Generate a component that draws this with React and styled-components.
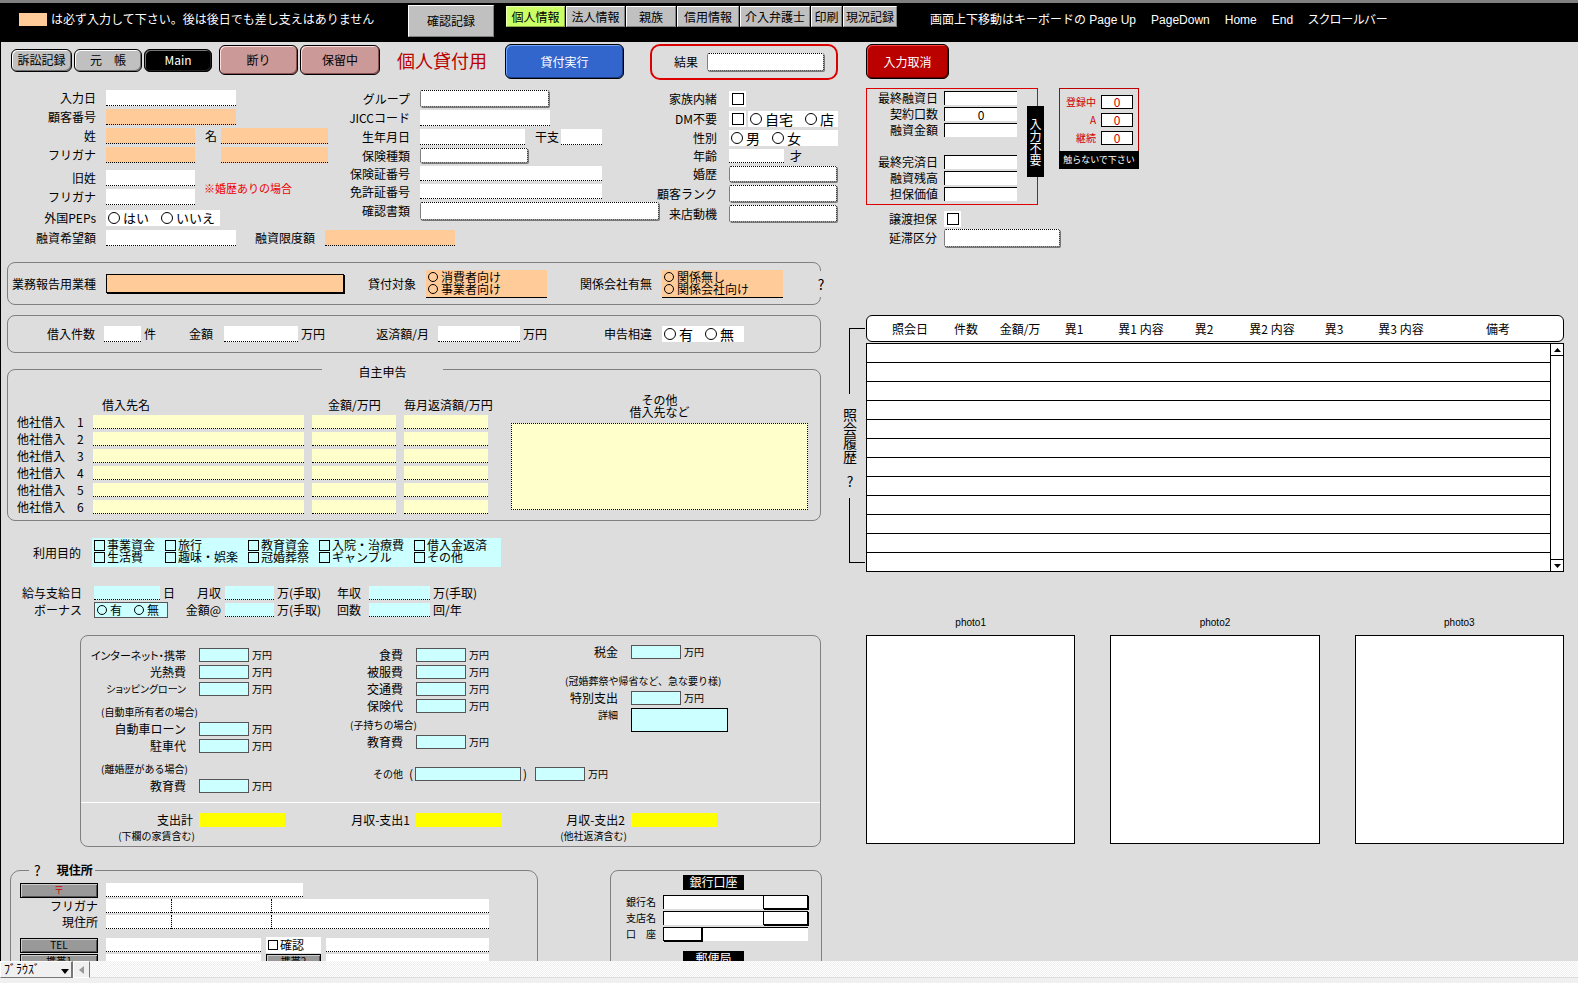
import React, { useId } from "react";
import styled, { createGlobalStyle, css } from "styled-components";

const PEACH = "#ffcc99";
const CYAN = "#ccffff";
const CREAM = "#ffffcc";
const GREY = "#dddddd";

const Global = createGlobalStyle`
  * { box-sizing: border-box; }
  body { margin: 0; background: ${GREY}; }
  body, button, input, select, textarea {
    font-family: "Noto Sans CJK JP", "Liberation Sans", sans-serif;
    font-size: 12px;
    line-height: 14px;
    color: #000;
  }
  input, textarea, button, select, fieldset, legend { margin: 0; padding: 0; border-radius: 0; }
`;

/* ---------- page frame ---------- */

const Page = styled.div`
  height: 100vh;
  display: flex;
  flex-direction: column;
  background: ${GREY};
`;

const TopBar = styled.header`
  flex: none;
  display: flex;
  align-items: flex-start;
  height: 42px;
  padding: 2px 0 0 19px;
  background: #000;
  border-top: 3px solid #808080;
  box-shadow: inset 0 -1px #000;
  color: #fff;
  white-space: nowrap;
`;

const Notice = styled.p`
  display: flex;
  align-items: center;
  gap: 4px;
  width: 389px;
  height: 28px;
  margin: 0;
`;

const Swatch = styled.span`
  width: 28px;
  height: 13px;
  background: ${PEACH};
`;

const FlatButton = styled.button`
  width: ${(p) => p.$w}px;
  height: ${(p) => p.$h}px;
  background: ${(p) => (p.$active ? "#ccff66" : "#c0c0c0")};
  border: 1px solid;
  border-color: ${(p) => (p.$active ? "#eeffbb #88aa44 #88aa44 #eeffbb" : "#fff #808080 #808080 #fff")};
  white-space: nowrap;
`;

const Tabs = styled.nav`
  display: flex;
  gap: 1px;
  padding: 1px 33px 0 12px;
`;

const KeyHints = styled.div`
  display: flex;
  align-items: center;
  gap: 15px;
  height: 30px;
  font-family: "Liberation Sans", "Noto Sans CJK JP", sans-serif;
  span:last-child { font-feature-settings: "palt"; }
`;

const Main = styled.main`
  flex: 1;
  min-height: 0;
  overflow: hidden;
  display: grid;
  grid-template-columns: 839px minmax(0, 1fr);
  align-items: start;
  border-left: 1px solid #000;
`;

const Side = styled.div`
  padding: 2px 14px 0 26px;
`;

/* ---------- fields ---------- */

const tones = { white: "#fff", peach: PEACH, cyan: CYAN, cream: CREAM, yellow: "#ffff00" };

const frames = {
  line: css`
    border: 0;
    border-bottom: 1px dotted #000;
  `,
  popup: css`
    border: 1px dotted #000;
    border-radius: 2px;
    box-shadow: 1px 1px #777;
  `,
  box: css`
    border: 1px solid #555;
  `,
  sunken: css`
    border: 0;
    border-top: 1px solid #000;
    border-left: 1px solid #000;
  `,
  full: css`
    border: 1px solid #000;
  `,
  raised: css`
    border: 1px solid #000;
    box-shadow: 1px 1px #000;
  `,
  none: css`
    border: 0;
  `,
};

const Input = styled.input`
  flex: none;
  display: block;
  width: ${(p) => p.$w}px;
  height: ${(p) => p.$h || 14}px;
  background: ${(p) => tones[p.$tone || "white"]};
  &&& { ${(p) => frames[p.$frame || "line"]} }
  ${(p) => p.$center && "text-align: center;"}
  ${(p) => p.$red && "color: #d00000;"}
`;

const Area = styled.textarea`
  display: block;
  width: ${(p) => p.$w}px;
  height: ${(p) => p.$h}px;
  resize: none;
  background: ${(p) => tones[p.$tone]};
  border: 1px ${(p) => p.$line} #000;
`;

const Label = styled.label`
  flex: none;
  width: ${(p) => (p.$w ? p.$w + "px" : "auto")};
  padding-right: ${(p) => p.$pad || 0}px;
  text-align: right;
  white-space: nowrap;
  color: ${(p) => p.$color || "#000"};
  ${(p) => p.$tight && 'font-size: 11px; font-feature-settings: "palt";'}
  ${(p) => p.$small && "font-size: 10px;"}
`;

const Caption = styled(Label).attrs({ as: "span" })``;

const Unit = styled.span`
  padding-left: 3px;
  white-space: nowrap;
  font-size: ${(p) => (p.$small ? 10 : 12)}px;
`;

const Row = styled.div`
  display: flex;
  align-items: center;
  height: ${(p) => p.$h || 16}px;
  gap: ${(p) => p.$gap || 0}px;
`;

const Stack = styled.div`
  display: flex;
  flex-direction: column;
  gap: ${(p) => p.$gap ?? 3}px;
  padding-top: ${(p) => p.$top || 0}px;
`;

const choice = css`
  appearance: none;
  flex: none;
  margin: 0;
  border: 1px solid #000;
`;

const Radio = styled.input.attrs({ type: "radio" })`
  ${choice}
  width: ${(p) => p.$d}px;
  height: ${(p) => p.$d}px;
  border-radius: 50%;
  &:checked { background: radial-gradient(#000 40%, transparent 45%); }
`;

const Check = styled.input.attrs({ type: "checkbox" })`
  ${choice}
  width: ${(p) => p.$d}px;
  height: ${(p) => p.$d}px;
  &:checked { background: #000; background-clip: content-box; padding: 2px; }
`;

const CheckCell = styled.span`
  display: grid;
  place-items: center;
  width: 17px;
  height: 16px;
  background: #fff;
`;

const Option = styled.label`
  display: flex;
  align-items: center;
  gap: ${(p) => p.$gap || 2}px;
  font-size: ${(p) => p.$size || 12}px;
  line-height: 12px;
  white-space: nowrap;
`;

const Choices = styled.div`
  display: flex;
  align-items: center;
  gap: 12px;
  width: ${(p) => p.$w}px;
  height: 16px;
  padding-left: 2px;
  background: ${(p) => tones[p.$tone || "white"]};
  border: ${(p) => (p.$framed ? "1px solid #555" : "0")};
`;

const ChoiceList = styled.div`
  width: 121px;
  height: 28px;
  padding: 1px 2px;
  background: ${PEACH};
  border-bottom: 1px solid #000;
`;

function Radios({ name, options, w, tone, framed, size = 14 }) {
  return (
    <Choices role="radiogroup" aria-label={name} $w={w} $tone={tone} $framed={framed}>
      {options.map((o) => (
        <Option key={o} $size={size} $gap={3}>
          <Radio name={name} $d={size === 12 ? 10 : 12} />
          {o}
        </Option>
      ))}
    </Choices>
  );
}

function Field({ label, lw, pad, h, w, tone, frame, value, small, tight, children }) {
  const id = useId();
  return (
    <Row $h={h}>
      <Label htmlFor={id} $w={lw} $pad={pad} $small={small} $tight={tight}>{label}</Label>
      <Input id={id} $w={w} $h={h} $tone={tone} $frame={frame} $center={value !== undefined} defaultValue={value} />
      {children}
    </Row>
  );
}

/* ---------- action row ---------- */

const Toolbar = styled.div`
  display: flex;
  align-items: flex-start;
  padding: 2px 0 0 10px;
`;

const Actions = styled.div`
  display: flex;
  align-items: center;
  gap: 2px;
  height: 32px;
  padding-right: ${(p) => p.$right}px;
`;

const skins = {
  grey: ["#c0c0c0", "#fff", "#707070", "#000"],
  black: ["#000", "#777", "#222", "#fff"],
  pink: ["#cc9999", "#ffdddd", "#885050", "#000"],
  blue: ["#3366cc", "#77aaff", "#183c88", "#fff"],
  red: ["#bb0000", "#ff4444", "#660000", "#fff"],
};

const RoundButton = styled.button`
  flex: none;
  width: ${(p) => p.$w}px;
  height: ${(p) => p.$h}px;
  color: ${(p) => skins[p.$skin][3]};
  background: ${(p) => skins[p.$skin][0]};
  && { border: 1px solid #000; border-radius: 6px; }
  box-shadow: inset 1px 1px ${(p) => skins[p.$skin][1]}, inset -1px -1px ${(p) => skins[p.$skin][2]};
`;

const Title = styled.h1`
  width: 108px;
  margin: 0;
  font-size: 18px;
  font-weight: 400;
  line-height: 32px;
  color: #bb0000;
  white-space: nowrap;
`;

const ResultBox = styled.div`
  display: flex;
  align-items: center;
  gap: 9px;
  width: 188px;
  height: 36px;
  margin-left: 26px;
  padding-left: 22px;
  border: 2px solid #dd0000;
  border-radius: 10px;
`;

const FormColumns = styled.div`
  display: grid;
  grid-template-columns: 335px 320px 182px;
  padding-top: 10px;
`;

const Hint = styled.p`
  margin: 0;
  padding: 7px 0 0 9px;
  color: #ee0000;
  font-size: 11px;
  white-space: nowrap;
`;

const FormerName = styled.div`
  display: flex;
  align-items: center;
`;

/* ---------- panels ---------- */

const Panel = styled.section`
  position: relative;
  display: grid;
  align-items: center;
  width: 814px;
  margin-left: 6px;
  border: 1px solid #808080;
  border-radius: 8px;
`;

const TradePanel = styled(Panel)`
  grid-template-columns: 84px 239px 61px 121px 95px 121px;
  column-gap: 10px;
  height: 43px;
  margin-top: 16px;
  padding-left: 4px;
`;

const HelpMark = styled.button`
  position: absolute;
  right: -6px;
  top: 8px;
  width: 10px;
  height: 26px;
  background: ${GREY};
  border: 0;
  font-size: 14px;
`;

const LoanPanel = styled(Panel)`
  grid-template-columns: 96px 37px 30px 53px 74px 40px 100px 82px 40px 102px 82px;
  height: 38px;
  margin-top: 10px;
`;

const DeclarePanel = styled.fieldset`
  width: 814px;
  min-width: 0;
  && { margin: 6px 0 0 6px; padding-bottom: 3px; border-radius: 8px; }
  border: 1px solid #808080;
`;

const CenterLegend = styled.legend`
  display: flex;
  justify-content: center;
  width: 121px;
  height: 20px;
  && { margin-left: 314px; padding-top: 6px; }
`;

const DeclareBody = styled.div`
  display: flex;
  gap: 23px;
  padding-left: 9px;
`;

const LenderTable = styled.table`
  width: 471px;
  flex: none;
  table-layout: fixed;
  border-collapse: collapse;
  th { font-weight: 400; text-align: left; padding: 0; white-space: nowrap; }
  thead th { height: 36px; vertical-align: bottom; padding-bottom: 3px; }
  thead th:nth-child(1) { width: 76px; }
  thead th:nth-child(2) { width: 219px; padding-left: 9px; }
  thead th:nth-child(3) { width: 92px; padding-left: 16px; }
  tbody th, td { height: 17px; padding: 0; vertical-align: top; }
`;

const OtherLenders = styled.div`
  padding-top: 15px;
  label { display: block; margin-bottom: 5px; text-align: center; line-height: 12px; }
`;

const Purpose = styled.section`
  display: flex;
  align-items: center;
  gap: 11px;
  margin-top: 17px;
`;

const PurposeGrid = styled.div`
  display: grid;
  grid-template-columns: 71px 83px 71px 95px 1fr;
  grid-auto-rows: 12px;
  width: 409px;
  height: 29px;
  padding: 1px 2px;
  background: ${CYAN};
`;

const Salary = styled.section`
  display: grid;
  grid-template-columns: 93px 66px 25px 40px 49px 60px 35px 61px 60px;
  grid-template-rows: 14px 16px;
  align-items: center;
  row-gap: 2px;
  margin-top: 19px;
`;

const ExpensePanel = styled.section`
  width: 741px;
  margin: 17px 0 0 79px;
  border: 1px solid #808080;
  border-radius: 8px;
`;

const ExpenseColumns = styled.div`
  display: grid;
  grid-template-columns: 217px 215px 1fr;
  padding-bottom: ${(p) => p.$bottom}px;
`;

const Note = styled.p`
  display: flex;
  align-items: flex-end;
  height: ${(p) => p.$h}px;
  margin: 0;
  padding-left: ${(p) => p.$left}px;
  font-size: 10px;
  line-height: 14px;
  white-space: nowrap;
`;

const TotalNote = styled.p`
  width: 118px;
  height: 12px;
  margin: 0;
  padding-right: 4px;
  font-size: 10px;
  line-height: 12px;
  text-align: right;
  white-space: nowrap;
`;

const Totals = styled(ExpenseColumns)`
  border-top: 1px solid #fff;
  padding-top: 10px;
`;

const OtherExpense = styled.div`
  display: flex;
  align-items: center;
  height: 14px;
  margin-top: 15px;
  padding-left: 75px;
  white-space: nowrap;
  label { font-size: 10px; width: 36px; flex: none; }
`;

const Paren = styled.span`
  flex: none;
  width: ${(p) => p.$w}px;
  padding-left: ${(p) => (p.$open ? 0 : 2)}px;
`;

const DetailRow = styled.div`
  display: flex;
  align-items: flex-start;
`;

const Bottom = styled.div`
  display: flex;
  align-items: flex-start;
  padding: 15px 0 0 9px;
`;

const AddressPanel = styled.fieldset`
  width: 528px;
  min-width: 0;
  min-height: 150px;
  && { padding: 5px 0 0 9px; border-radius: 10px; }
  border: 1px solid #808080;
`;

const AddressLegend = styled.legend`
  display: flex;
  align-items: center;
  gap: 16px;
  height: 16px;
  && { margin-left: 9px; padding: 0 2px 0 5px; }
  font-weight: 700;
  button { border: 0; background: none; font-size: 14px; }
`;

const SlabButton = styled.button`
  flex: none;
  width: ${(p) => p.$w}px;
  height: 15px;
  font-size: 10px;
  line-height: 10px;
  color: ${(p) => (p.$red ? "#dd0000" : "#000")};
  background: #999;
  border: 1px solid #000;
  box-shadow: inset 1px 1px #ccc, inset -1px -1px #555;
`;

const Segments = styled.div`
  display: flex;
  > span + span { border-left: 1px dotted #000; }
`;

const BankPanel = styled.section`
  width: 212px;
  min-height: 142px;
  margin: 8px 0 0 72px;
  padding: 4px 0 0 15px;
  border: 1px solid #808080;
  border-radius: 8px;
`;

const BlackTag = styled.h2`
  width: 61px;
  height: 15px;
  margin: ${(p) => p.$top}px 0 5px 57px;
  background: #000;
  color: #fff;
  font-size: 12px;
  font-weight: 400;
  text-align: center;
`;

const BankLabel = styled.label`
  flex: none;
  width: 37px;
  font-size: 10px;
  white-space: pre;
`;

/* ---------- right side ---------- */

const SummaryRow = styled.div`
  display: flex;
  align-items: flex-start;
  gap: 21px;
  padding-top: 9px;
`;

const SummaryBox = styled.section`
  position: relative;
  width: 172px;
  height: 117px;
  padding-top: 2px;
  border: 1px solid #dd0000;
`;

const NoEntry = styled.strong`
  position: absolute;
  top: 17px;
  right: -7px;
  width: 17px;
  height: 71px;
  background: #000;
  color: #fff;
  font-weight: 400;
  line-height: 17px;
  text-align: center;
  writing-mode: vertical-rl;
`;

const CounterBox = styled.section`
  width: 80px;
  height: 81px;
  display: flex;
  flex-direction: column;
  justify-content: space-between;
  padding-top: 6px;
  border: 1px solid #bb0000;
  border-bottom: 0;
`;

const CounterFoot = styled.p`
  height: 18px;
  margin: 0 -1px;
  background: #000;
  color: #fff;
  font-size: 9px;
  line-height: 18px;
  text-align: center;
  white-space: nowrap;
`;

const History = styled.section`
  display: flex;
  margin: 68px 0 0 -26px;
`;

const Bracket = styled.div`
  flex: none;
  display: flex;
  flex-direction: column;
  width: 26px;
  padding: 13px 0 9px;
`;

const BracketArm = styled.span`
  flex: 1;
  margin-left: 9px;
  margin-right: 1px;
  border-left: 1px solid #000;
  ${(p) => (p.$end ? "border-bottom: 1px solid #000;" : "border-top: 1px solid #000;")}
`;

const BracketTitle = styled.h2`
  display: flex;
  flex-direction: column;
  align-items: center;
  justify-content: space-between;
  width: 20px;
  height: 104px;
  margin: 0;
  padding: 14px 0 10px;
  font-size: 14px;
  font-weight: 400;
  span { writing-mode: vertical-rl; line-height: 20px; }
  button { border: 0; background: none; font-size: 14px; }
`;

const TableFrame = styled.div`
  position: relative;
  flex: 1;
  min-width: 0;
`;

const HistoryTable = styled.table`
  display: block;
  thead, tbody { display: block; }
  thead tr {
    display: grid;
    grid-template-columns: 64fr 48fr 60fr 48fr 86fr 40fr 96fr 28fr 106fr 88fr;
    align-items: center;
    height: 27px;
    padding: 0 21px 0 11px;
    background: #fff;
    border: 1px solid #000;
    border-radius: 6px;
  }
  th { padding: 0; font-weight: 400; white-space: nowrap; }
  tbody {
    margin: 1px 13px 0 0;
    background: #fff;
    border: 1px solid #000;
    border-bottom: 0;
  }
  tbody tr { display: block; height: 19px; border-bottom: 1px solid #000; }
`;

const ScrollTrack = styled.div`
  position: absolute;
  top: 28px;
  right: 0;
  bottom: 0;
  display: flex;
  flex-direction: column;
  justify-content: space-between;
  width: 14px;
  background: #fff;
  border: 1px solid #000;
`;

const ScrollButton = styled.button`
  display: grid;
  place-items: center;
  height: 12px;
  background: #fff;
  border: 0;
  ${(p) => (p.$down ? "border-top: 1px solid #000;" : "border-bottom: 1px solid #000;")}
`;

const Photos = styled.section`
  display: grid;
  grid-template-columns: repeat(3, minmax(0, 1fr));
  gap: 35px;
  padding-top: 45px;
`;

const Photo = styled.figure`
  margin: 0;
  figcaption {
    margin-bottom: 6px;
    font-family: "Liberation Sans", sans-serif;
    font-size: 10px;
    line-height: 12px;
    text-align: center;
  }
  div { aspect-ratio: 1; background: #fff; border: 1px solid #000; }
`;

/* ---------- status bar ---------- */

const StatusBar = styled.footer`
  flex: none;
  display: flex;
  height: 22px;
  background: repeating-conic-gradient(#fff 0 25%, #efefef 0 50%) 0 0 / 2px 2px;
  border-bottom: 5px solid #f0f0f0;
  box-shadow: inset 0 -1px #ddd;
`;

const ModeBox = styled.div`
  position: relative;
  width: 73px;
  background: #f0f0f0;
  border: 1px solid #fff;
  border-right: 2px solid #777;
  border-bottom-color: #777;
  select { appearance: none; display: block; width: 100%; height: 14px; padding-left: 3px; border: 0; background: none; }
  svg { position: absolute; right: 2px; top: 7px; pointer-events: none; }
`;

const BackButton = styled.button`
  display: grid;
  place-items: center;
  width: 17px;
  background: #f0f0f0;
  border: 1px solid #fff;
  border-right: 1px solid #777;
`;

const Triangle = ({ points, w, h, fill = "#000" }) => (
  <svg width={w} height={h} viewBox={`0 0 ${w} ${h}`} aria-hidden="true">
    <polygon points={points} fill={fill} />
  </svg>
);

/* ---------- sections ---------- */

const tabs = [
  ["個人情報", 59],
  ["法人情報", 59],
  ["親族", 50],
  ["信用情報", 62],
  ["介入弁護士", 70],
  ["印刷", 31],
  ["現況記録", 54],
];

function Header() {
  return (
    <TopBar>
      <Notice>
        <Swatch />
        は必ず入力して下さい。後は後日でも差し支えはありません
      </Notice>
      <FlatButton $w={86} $h={32}>確認記録</FlatButton>
      <Tabs>
        {tabs.map(([name, w], i) => (
          <FlatButton key={name} $w={w} $h={21} $active={i === 0}>{name}</FlatButton>
        ))}
      </Tabs>
      <KeyHints>
        <span>画面上下移動はキーボードの Page Up</span>
        <span>PageDown</span>
        <span>Home</span>
        <span>End</span>
        <span>スクロールバー</span>
      </KeyHints>
    </TopBar>
  );
}

function PersonColumn() {
  return (
    <div>
      <Stack>
        <Field label="入力日" lw={105} pad={10} w={130} h={16} />
        <Field label="顧客番号" lw={105} pad={10} w={130} h={16} tone="peach" />
        <Field label="姓" lw={105} pad={10} w={89} h={16} tone="peach">
          <Label htmlFor="given" $w={26} $pad={4}>名</Label>
          <Input id="given" $w={107} $h={16} $tone="peach" />
        </Field>
        <Field label="フリガナ" lw={105} pad={10} w={89} h={16} tone="peach">
          <Caption $w={26} />
          <Input aria-label="名 フリガナ" $w={107} $h={16} $tone="peach" />
        </Field>
      </Stack>
      <FormerName>
        <Stack $top={7}>
          <Field label="旧姓" lw={105} pad={10} w={89} h={16} />
          <Field label="フリガナ" lw={105} pad={10} w={89} h={16} />
        </Stack>
        <Hint>※婚歴ありの場合</Hint>
      </FormerName>
      <Stack $top={5}>
        <Row>
          <Caption $w={105} $pad={10}>外国PEPs</Caption>
          <Radios name="外国PEPs" options={["はい", "いいえ"]} w={114} size={13} />
        </Row>
      </Stack>
    </div>
  );
}

function DocumentColumn() {
  const l = { lw: 84, pad: 10 };
  return (
    <Stack>
      <Field label="グループ" {...l} w={129} h={17} frame="popup" />
      <Field label="JICCコード" {...l} w={130} h={16} />
      <Field label="生年月日" {...l} w={105} h={16}>
        <Label htmlFor="zodiac" $w={36} $pad={2}>干支</Label>
        <Input id="zodiac" $w={41} $h={16} />
      </Field>
      <Field label="保険種類" {...l} w={108} h={15} frame="popup" />
      <Field label="保険証番号" {...l} w={182} h={15} />
      <Field label="免許証番号" {...l} w={182} h={15} />
      <Field label="確認書類" {...l} w={239} h={18} frame="popup" />
    </Stack>
  );
}

function TraitsColumn() {
  const l = { lw: 73, pad: 12 };
  return (
    <Stack>
      <Row $h={18}>
        <Label htmlFor="secret" $w={73} $pad={12}>家族内緒</Label>
        <CheckCell><Check id="secret" $d={12} /></CheckCell>
      </Row>
      <Row>
        <Label htmlFor="nodm" $w={73} $pad={12}>DM不要</Label>
        <Row $gap={2}>
          <CheckCell><Check id="nodm" $d={12} /></CheckCell>
          <Radios name="DM送付先" options={["自宅", "店"]} w={90} />
        </Row>
      </Row>
      <Row>
        <Caption $w={73} $pad={12}>性別</Caption>
        <Radios name="性別" options={["男", "女"]} w={109} />
      </Row>
      <Field label="年齢" {...l} w={55} h={14}>
        <Caption $w={18}>才</Caption>
      </Field>
      <Field label="婚歴" {...l} w={108} h={16} frame="popup" />
      <Field label="顧客ランク" {...l} w={108} h={17} frame="popup" />
      <Field label="来店動機" {...l} w={108} h={17} frame="popup" />
    </Stack>
  );
}

function Panels() {
  return (
    <>
      <TradePanel>
        <Label htmlFor="trade">業務報告用業種</Label>
        <Input id="trade" $w={238} $h={19} $tone="peach" $frame="raised" />
        <Caption>貸付対象</Caption>
        <ChoiceList>
          <Option $gap={3}><Radio name="target" $d={10} />消費者向け</Option>
          <Option $gap={3}><Radio name="target" $d={10} />事業者向け</Option>
        </ChoiceList>
        <Caption>関係会社有無</Caption>
        <ChoiceList>
          <Option $gap={3}><Radio name="affiliate" $d={10} />関係無し</Option>
          <Option $gap={3}><Radio name="affiliate" $d={10} />関係会社向け</Option>
        </ChoiceList>
        <HelpMark>?</HelpMark>
      </TradePanel>

      <LoanPanel>
        <Label htmlFor="loans" $pad={9}>借入件数</Label>
        <Input id="loans" $w={37} $h={16} />
        <Unit>件</Unit>
        <Label htmlFor="loanSum" $pad={11}>金額</Label>
        <Input id="loanSum" $w={74} $h={16} />
        <Unit>万円</Unit>
        <Label htmlFor="repay" $pad={9}>返済額/月</Label>
        <Input id="repay" $w={82} $h={16} />
        <Unit>万円</Unit>
        <Caption $pad={10}>申告相違</Caption>
        <Radios name="申告相違" options={["有", "無"]} w={82} />
      </LoanPanel>

      <DeclarePanel>
        <CenterLegend>自主申告</CenterLegend>
        <DeclareBody>
          <LenderTable>
            <thead>
              <tr>
                <th aria-label="番号" />
                <th>借入先名</th>
                <th>金額/万円</th>
                <th>毎月返済額/万円</th>
              </tr>
            </thead>
            <tbody>
              {[1, 2, 3, 4, 5, 6].map((n) => (
                <tr key={n}>
                  <th scope="row">他社借入　{n}</th>
                  <td><Input aria-label={`借入先名 ${n}`} $w={211} $tone="cream" /></td>
                  <td><Input aria-label={`金額 ${n}`} $w={84} $tone="cream" /></td>
                  <td><Input aria-label={`毎月返済額 ${n}`} $w={84} $tone="cream" /></td>
                </tr>
              ))}
            </tbody>
          </LenderTable>
          <OtherLenders>
            <label htmlFor="others">その他<br />借入先など</label>
            <Area id="others" $w={297} $h={87} $tone="cream" $line="dotted" />
          </OtherLenders>
        </DeclareBody>
      </DeclarePanel>
    </>
  );
}

const purposes = [
  "事業資金", "旅行", "教育資金", "入院・治療費", "借入金返済",
  "生活費", "趣味・娯楽", "冠婚葬祭", "ギャンブル", "その他",
];

function Income() {
  return (
    <>
      <Purpose>
        <Caption $w={80}>利用目的</Caption>
        <PurposeGrid>
          {purposes.map((p) => (
            <Option key={p}><Check $d={11} />{p}</Option>
          ))}
        </PurposeGrid>
      </Purpose>
      <Salary>
        <Label htmlFor="payday" $pad={12}>給与支給日</Label>
        <Input id="payday" $w={66} $tone="cyan" />
        <Unit>日</Unit>
        <Label htmlFor="monthly" $pad={4}>月収</Label>
        <Input id="monthly" $w={49} $tone="cyan" />
        <Unit>万(手取)</Unit>
        <Label htmlFor="yearly" $pad={8}>年収</Label>
        <Input id="yearly" $w={61} $tone="cyan" />
        <Unit>万(手取)</Unit>
        <Caption $pad={12}>ボーナス</Caption>
        <Radios name="ボーナス" options={["有", "無"]} w={74} tone="cyan" framed size={12} />
        <span />
        <Label htmlFor="bonus" $pad={4}>金額@</Label>
        <Input id="bonus" $w={49} $tone="cyan" />
        <Unit>万(手取)</Unit>
        <Label htmlFor="times" $pad={8}>回数</Label>
        <Input id="times" $w={61} $tone="cyan" />
        <Unit>回/年</Unit>
      </Salary>
    </>
  );
}

function Cost({ label, small, tight }) {
  return (
    <Field label={label} lw={118} pad={13} w={50} h={14} tone="cyan" frame="box" small={small} tight={tight}>
      <Unit $small>万円</Unit>
    </Field>
  );
}

function Total({ label, note }) {
  return (
    <Stack>
      <Field label={label} lw={118} pad={6} w={86} h={14} tone="yellow" frame="none" />
      <TotalNote>{note}</TotalNote>
    </Stack>
  );
}

function Expenses() {
  return (
    <ExpensePanel>
      <ExpenseColumns $bottom={9}>
        <Stack $top={12}>
          <Cost label="インターネット・携帯" tight />
          <Cost label="光熱費" />
          <Cost label="ショッピングローン" small tight />
          <Note $h={20} $left={20}>(自動車所有者の場合)</Note>
          <Cost label="自動車ローン" />
          <Cost label="駐車代" />
          <Note $h={20} $left={20}>(離婚歴がある場合)</Note>
          <Cost label="教育費" />
        </Stack>
        <Stack $top={12}>
          <Cost label="食費" />
          <Cost label="被服費" />
          <Cost label="交通費" />
          <Cost label="保険代" />
          <Note $h={16} $left={52}>(子持ちの場合)</Note>
          <Cost label="教育費" />
          <OtherExpense>
            <label htmlFor="otherCost">その他</label>
            <Paren $w={6} $open>(</Paren>
            <Input id="otherCost" $w={106} $tone="cyan" $frame="box" />
            <Paren $w={14}>)</Paren>
            <Input aria-label="その他 金額" $w={50} $tone="cyan" $frame="box" />
            <Unit $small>万円</Unit>
          </OtherExpense>
        </Stack>
        <Stack $top={9}>
          <Cost label="税金" />
          <Note $h={26} $left={52}>(冠婚葬祭や帰省など、急な要り様)</Note>
          <Cost label="特別支出" />
          <DetailRow>
            <Label htmlFor="detail" $w={118} $pad={13} $small>詳細</Label>
            <Area id="detail" $w={97} $h={24} $tone="cyan" $line="solid" />
          </DetailRow>
        </Stack>
      </ExpenseColumns>
      <Totals $bottom={4}>
        <Total label="支出計" note="(下欄の家賃含む)" />
        <Total label="月収-支出1" />
        <Total label="月収-支出2" note="(他社返済含む)" />
      </Totals>
    </ExpensePanel>
  );
}

function AddressLine({ label }) {
  return (
    <Row $h={14}>
      <Caption $w={86} $pad={8}>{label}</Caption>
      <Segments>
        <span><Input aria-label={`${label} 都道府県`} $w={65} /></span>
        <span><Input aria-label={`${label} 市区町村`} $w={99} /></span>
        <span><Input aria-label={`${label} 番地`} $w={217} /></span>
      </Segments>
    </Row>
  );
}

function Address() {
  return (
    <AddressPanel>
      <AddressLegend><button>?</button>現住所</AddressLegend>
      <Stack $gap={2}>
        <Row $h={14} $gap={8}>
          <SlabButton $w={78} $red>〒</SlabButton>
          <Input aria-label="郵便番号" $w={197} />
        </Row>
        <AddressLine label="フリガナ" />
        <AddressLine label="現住所" />
      </Stack>
      <Stack $gap={2} $top={9}>
        <Row $h={14} $gap={8}>
          <SlabButton $w={78}>TEL</SlabButton>
          <Row $h={14} $gap={5}>
            <Input aria-label="TEL" $w={155} />
            <Choices as="span" $w={55}><Option><Check $d={10} />確認</Option></Choices>
            <Input aria-label="TEL 備考" $w={163} />
          </Row>
        </Row>
        <Row $h={14} $gap={8}>
          <SlabButton $w={78}>携帯1</SlabButton>
          <Row $h={14} $gap={5}>
            <Input aria-label="携帯1" $w={155} />
            <SlabButton $w={55}>携帯2</SlabButton>
            <Input aria-label="携帯2" $w={163} />
          </Row>
        </Row>
      </Stack>
    </AddressPanel>
  );
}

function Bank() {
  return (
    <BankPanel>
      <BlackTag $top={0}>銀行口座</BlackTag>
      <Stack $gap={2}>
        <Row $h={14}>
          <BankLabel htmlFor="bank">銀行名</BankLabel>
          <Input id="bank" $w={100} $frame="sunken" />
          <Input aria-label="銀行コード" $w={45} $frame="raised" />
        </Row>
        <Row $h={14}>
          <BankLabel htmlFor="branch">支店名</BankLabel>
          <Input id="branch" $w={100} $frame="sunken" />
          <Input aria-label="支店コード" $w={45} $frame="raised" />
        </Row>
        <Row $h={14}>
          <BankLabel htmlFor="account">口　座</BankLabel>
          <Input id="account" $w={39} $frame="raised" />
          <Input aria-label="口座番号" $w={106} $frame="sunken" />
        </Row>
      </Stack>
      <BlackTag $top={10}>郵便局</BlackTag>
    </BankPanel>
  );
}

function Summary() {
  const s = { lw: 77, pad: 6, w: 73, h: 14, frame: "sunken" };
  const counters = ["登録中", "A", "継続"];
  return (
    <>
      <SummaryRow>
        <SummaryBox>
          <Stack $gap={18}>
            <Stack $gap={2}>
              <Field label="最終融資日" {...s} />
              <Field label="契約口数" {...s} value="0" />
              <Field label="融資金額" {...s} />
            </Stack>
            <Stack $gap={2}>
              <Field label="最終完済日" {...s} />
              <Field label="融資残高" {...s} />
              <Field label="担保価値" {...s} />
            </Stack>
          </Stack>
          <NoEntry>入力不要</NoEntry>
        </SummaryBox>
        <CounterBox>
          <Stack $gap={4}>
            {counters.map((c) => (
              <Row key={c} $h={14}>
                <Label htmlFor={`count-${c}`} $w={41} $pad={5} $small $color="#d00000">{c}</Label>
                <Input id={`count-${c}`} $w={32} $frame="full" $center $red defaultValue="0" />
              </Row>
            ))}
          </Stack>
          <CounterFoot>触らないで下さい</CounterFoot>
        </CounterBox>
      </SummaryRow>
      <Stack $top={6} $gap={2}>
        <Row>
          <Label htmlFor="transfer" $w={78} $pad={7}>譲渡担保</Label>
          <CheckCell><Check id="transfer" $d={12} /></CheckCell>
        </Row>
        <Field label="延滞区分" lw={78} pad={7} w={116} h={18} frame="popup" />
      </Stack>
    </>
  );
}

const historyHeads = ["照会日", "件数", "金額/万", "異1", "異1 内容", "異2", "異2 内容", "異3", "異3 内容", "備考"];

function HistorySection() {
  return (
    <History>
      <Bracket>
        <BracketArm />
        <BracketTitle>
          <span>照会履歴</span>
          <button>?</button>
        </BracketTitle>
        <BracketArm $end />
      </Bracket>
      <TableFrame>
        <HistoryTable>
          <thead>
            <tr>{historyHeads.map((h) => <th key={h}>{h}</th>)}</tr>
          </thead>
          <tbody>
            {Array.from({ length: 12 }, (_, i) => (
              <tr key={i}><td colSpan={10} /></tr>
            ))}
          </tbody>
        </HistoryTable>
        <ScrollTrack>
          <ScrollButton aria-label="上へ"><Triangle w={7} h={4} points="0,4 3.5,0 7,4" /></ScrollButton>
          <ScrollButton $down aria-label="下へ"><Triangle w={7} h={4} points="0,0 7,0 3.5,4" /></ScrollButton>
        </ScrollTrack>
      </TableFrame>
    </History>
  );
}

export default function App() {
  return (
    <>
      <Global />
      <Page>
        <Header />
        <Main>
          <div>
            <Toolbar>
              <Actions $right={7}>
                <RoundButton $skin="grey" $w={61} $h={23}>訴訟記録</RoundButton>
                <RoundButton $skin="grey" $w={68} $h={23}>元　帳</RoundButton>
                <RoundButton $skin="black" $w={68} $h={23}>Main</RoundButton>
              </Actions>
              <Actions $right={17}>
                <RoundButton $skin="pink" $w={79} $h={30}>断り</RoundButton>
                <RoundButton $skin="pink" $w={80} $h={30}>保留中</RoundButton>
              </Actions>
              <Title>個人貸付用</Title>
              <RoundButton $skin="blue" $w={119} $h={35}>貸付実行</RoundButton>
              <ResultBox>
                <label htmlFor="result">結果</label>
                <Input id="result" $w={117} $h={18} $frame="popup" />
              </ResultBox>
            </Toolbar>
            <FormColumns>
              <PersonColumn />
              <DocumentColumn />
              <TraitsColumn />
            </FormColumns>
            <Stack $top={4}>
              <Field label="融資希望額" lw={105} pad={10} w={130} h={16}>
                <Label htmlFor="limit" $w={89} $pad={10}>融資限度額</Label>
                <Input id="limit" $w={130} $h={16} $tone="peach" />
              </Field>
            </Stack>
            <Panels />
            <Income />
            <Expenses />
            <Bottom>
              <Address />
              <Bank />
            </Bottom>
          </div>
          <Side>
            <RoundButton $skin="red" $w={83} $h={35}>入力取消</RoundButton>
            <Summary />
            <HistorySection />
            <Photos>
              {["photo1", "photo2", "photo3"].map((p) => (
                <Photo key={p}>
                  <figcaption>{p}</figcaption>
                  <div />
                </Photo>
              ))}
            </Photos>
          </Side>
        </Main>
        <StatusBar>
          <ModeBox>
            <select aria-label="モード"><option>ﾌﾞﾗｳｽﾞ</option></select>
            <Triangle w={8} h={5} points="0,0 8,0 4,5" />
          </ModeBox>
          <BackButton aria-label="左へ">
            <Triangle w={5} h={8} points="5,0 5,8 0,4" fill="#999" />
          </BackButton>
        </StatusBar>
      </Page>
    </>
  );
}
